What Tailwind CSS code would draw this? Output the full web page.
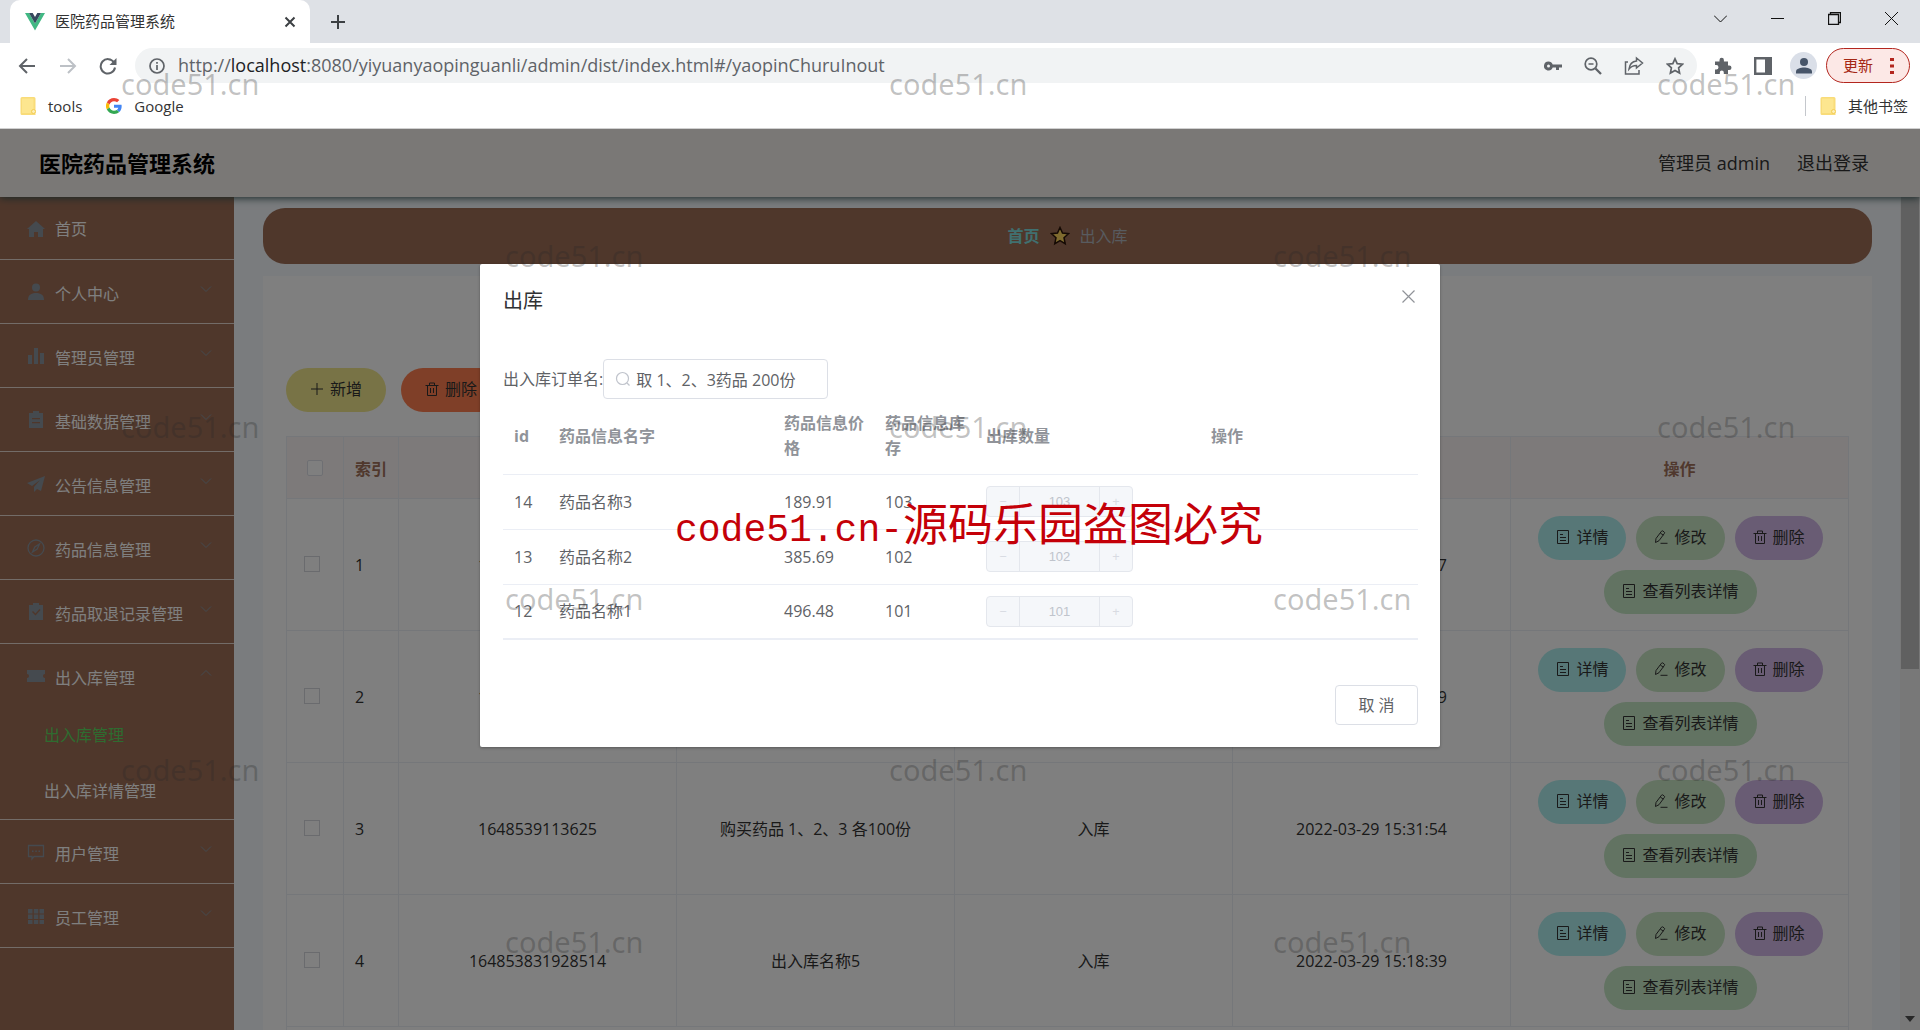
<!DOCTYPE html>
<html lang="zh-CN">
<head>
<meta charset="utf-8">
<meta name="viewport" content="width=device-width, initial-scale=1">
<title>医院药品管理系统</title>
<script src="https://cdn.jsdelivr.net/npm/@tailwindcss/browser@4"></script>
</head>
<body class="relative flex h-screen flex-col overflow-hidden bg-white font-['Open_Sans','Noto_Sans_CJK_SC',sans-serif] text-base text-[#333]">

<!-- Shared icon shapes -->
<svg class="hidden" aria-hidden="true">
  <symbol id="i-doc" viewBox="0 0 14 14"><path d="M1.5.5h11v13h-11zM4 4.5h3M4 7.5h6M4 10.500h6" fill="none" stroke="currentColor"/></symbol>
  <symbol id="i-edit" viewBox="0 0 14 14"><path d="M1.500 12.500 2 8.500 7.500 1.200a1 1 0 0 1 1.400-.2l1.300 1a1 1 0 0 1 .2 1.400L5 10.700ZM6.300 3l3 2.200M6.500 13.300H13.500" fill="none" stroke="currentColor"/></symbol>
  <symbol id="i-trash" viewBox="0 0 14 14"><path d="M.5 3.500h13M4.500 3.500v-2.500h5v2.500M2.500 3.500v10h9v-10M5.500 6v5M8.500 6v5" fill="none" stroke="currentColor"/></symbol>
  <symbol id="i-plus" viewBox="0 0 14 14"><path d="M7 1v12M1 7h12" fill="none" stroke="currentColor"/></symbol>
  <symbol id="i-down" viewBox="0 0 12 12"><path d="m1 3.500 5 5 5-5" fill="none" stroke="currentColor"/></symbol>
  <symbol id="i-folder" viewBox="0 0 16 18"><path d="M2 0h12a1.500 1.500 0 0 1 1.500 1.500V18H2A1.500 1.500 0 0 1 .5 16.500v-15A1.500 1.500 0 0 1 2 0Z" fill="#f9dc79"/><path d="M2 1.500h11.500V16H2Z" fill="#fde68f"/><circle cx="13.500" cy="14.500" r="2" fill="#fdeeb4" stroke="#f3cc52"/></symbol>
</svg>

<!-- Browser frame -->
<div class="flex h-[43px] shrink-0 items-stretch bg-[#dee1e6]">
  <div class="ml-[10px] flex w-[300px] items-center rounded-t-[10px] bg-white pr-[13px] pl-[15px] text-[15px]">
    <svg class="h-[18px] w-5" viewBox="0 0 20 18"><path d="M0 0h4l6 10.500L16 0h4L10 17.500Z" fill="#41b883"/><path d="M4 0h3.700L10 4l2.300-4H16l-6 10.500Z" fill="#35495e"/></svg>
    <span class="ml-[10px] flex-1">医院药品管理系统</span>
    <button aria-label="关闭标签页" class="grid size-[14px] place-items-center"><svg class="size-3" viewBox="0 0 12 12"><path d="m1.500 1.500 9 9m0-9-9 9" stroke="#3c4043" stroke-width="2"/></svg></button>
  </div>
  <button aria-label="新标签页" class="ml-5 grid w-4 place-items-center"><svg class="size-4" viewBox="0 0 16 16"><path d="M8 1v14M1 8h14" stroke="#3c4043" stroke-width="2"/></svg></button>
  <div class="mr-[22px] ml-auto flex items-center gap-11 pb-[6px] text-[#111]">
    <button aria-label="搜索标签页"><svg class="size-[13px]" viewBox="0 0 13 13"><path d="m0 3.500 6.500 6.500L13 3.500" fill="none" stroke="currentColor"/></svg></button>
    <button aria-label="最小化"><svg class="size-[13px]" viewBox="0 0 13 13"><path d="M0 6.500h13" stroke="currentColor"/></svg></button>
    <button aria-label="还原"><svg class="size-[13px]" viewBox="0 0 13 13"><path d="M.5 2.500h10v10H.5zM2.500 2.500v-2h10v10h-2" fill="none" stroke="currentColor" stroke-width="1.300"/></svg></button>
    <button aria-label="关闭"><svg class="size-[13px]" viewBox="0 0 13 13"><path d="m0 0 13 13M13 0 0 13" stroke="currentColor"/></svg></button>
  </div>
</div>
<div class="flex h-[45px] shrink-0 items-center bg-white pr-[10px] pl-[18px] text-[#5f6368]">
  <button aria-label="后退"><svg class="size-[18px]" viewBox="0 0 18 18"><path d="M17 9H2M9 2 2 9l7 7" fill="none" stroke="currentColor" stroke-width="2"/></svg></button>
  <button aria-label="前进" class="ml-[23px] text-[#bdc1c6]"><svg class="size-[18px]" viewBox="0 0 18 18"><path d="M1 9h15M9 2l7 7-7 7" fill="none" stroke="currentColor" stroke-width="2"/></svg></button>
  <button aria-label="重新加载" class="ml-[22px]"><svg class="size-[18px]" viewBox="0 0 18 18"><path d="M15 5.500A7.200 7.200 0 1 0 16 10.500" fill="none" stroke="currentColor" stroke-width="2"/><path d="M17.500 1v7h-7Z" fill="currentColor"/></svg></button>
  <div class="ml-[18px] flex h-[35px] flex-1 items-center rounded-full bg-[#f1f3f4] pr-[13px] pl-[14px]">
    <svg class="size-4 shrink-0" viewBox="0 0 16 16"><circle cx="8" cy="8" r="7" fill="none" stroke="currentColor" stroke-width="1.700"/><path d="M8 7v5M8 4v1.800" stroke="currentColor" stroke-width="1.700"/></svg>
    <div class="ml-[13px] flex-1 pb-[2px] text-lg leading-6 whitespace-nowrap">http://<span class="text-[#202124]">localhost</span>:8080/yiyuanyaopinguanli/admin/dist/index.html#/yaopinChuruInout</div>
    <div class="flex items-center gap-[22px]">
      <button aria-label="密码"><svg class="size-[18px]" viewBox="0 0 18 18"><path fill-rule="evenodd" d="M4.500 4.500a4.500 4.500 0 1 0 4.200 6H12V13h3v-2.500h3v-3H8.700a4.500 4.500 0 0 0-4.200-3Zm0 3a1.500 1.500 0 1 1 0 3 1.500 1.500 0 0 1 0-3Z" fill="currentColor"/></svg></button>
      <button aria-label="缩放"><svg class="size-[18px]" viewBox="0 0 18 18"><circle cx="7" cy="7" r="5.800" fill="none" stroke="currentColor" stroke-width="1.700"/><path d="m11.500 11.500 5.500 5.500" stroke="currentColor" stroke-width="2.300"/><path d="M4.500 7h5" stroke="currentColor" stroke-width="1.500"/></svg></button>
      <button aria-label="分享"><svg class="size-5" viewBox="0 0 20 20"><path d="M4 6H1.500v12h13.500v-4M12.500 2l6 5-6 5V9.500C9 9.500 7 10.500 5 13c.5-4 3-7.500 7.500-8Z" fill="none" stroke="currentColor" stroke-width="1.500"/></svg></button>
      <button aria-label="收藏"><svg class="size-[18px]" viewBox="0 0 18 18"><path d="m9 1.800 2.200 4.800 5.300.6-3.900 3.600 1 5.200L9 13.400 4.400 16l1-5.200L1.500 7.200l5.300-.6Z" fill="none" stroke="currentColor" stroke-width="1.700"/></svg></button>
    </div>
  </div>
  <div class="ml-[17px] flex items-center">
    <button aria-label="扩展程序"><svg class="size-[18px]" viewBox="0 0 18 18"><path d="M1 4.500h4.500V3a2.200 2.200 0 0 1 4.400 0v1.500H14V8.500h1.300a2.200 2.200 0 0 1 0 4.400H14V17H9.800v-1.500a2 2 0 0 0-4 0V17H1v-4.500h1.300a2.200 2.200 0 0 0 0-4.400H1Z" fill="currentColor"/></svg></button>
    <button aria-label="侧边栏" class="ml-[22px]"><svg class="size-[18px]" viewBox="0 0 18 18"><path d="M1.200 1.200h15.600v15.600H1.200z" fill="none" stroke="currentColor" stroke-width="2.400"/><path d="M11 1h6v16h-6z" fill="currentColor"/></svg></button>
    <button aria-label="用户" class="ml-[18px] grid size-[27px] place-items-center rounded-full bg-[#dadfe8]"><svg class="size-4" viewBox="0 0 16 16"><circle cx="8" cy="4" r="4" fill="#475569"/><path d="M0 15.500v-2C0 10.500 5 9.500 8 9.500s8 1 8 4v2Z" fill="#475569"/></svg></button>
    <button class="ml-[9px] flex h-[35px] w-[84px] items-center justify-between rounded-full border border-[#b3261e] bg-[#fce8e6] pr-[15px] pl-4 text-[15px] text-[#a52714]">更新<svg class="h-[18px] w-1" viewBox="0 0 4 18"><path d="M0 1h4v3H0zM0 7.500h4v3H0zM0 14h4v3H0z" fill="#b3261e"/></svg></button>
  </div>
</div>
<div class="flex h-[41px] shrink-0 items-center border-b border-[#d0d0d0] pr-3 pb-1 pl-5 text-[15px]">
  <a href="#" class="flex items-center gap-3"><svg class="h-[18px] w-4"><use href="#i-folder"/></svg>tools</a>
  <a href="#" class="ml-6 flex items-center gap-3"><svg class="size-4" viewBox="0 0 48 48"><path fill="#EA4335" d="M24 9.500c3.500 0 6.700 1.200 9.200 3.600l6.900-6.900C35.900 2.400 30.500 0 24 0 14.600 0 6.500 5.400 2.600 13.200l8 6.200C12.400 13.700 17.700 9.500 24 9.500z"/><path fill="#4285F4" d="M47 24.500c0-1.600-.2-3.100-.4-4.500H24v9h12.900c-.6 3-2.200 5.500-4.700 7.200l7.700 6C44.400 38 47 31.800 47 24.500z"/><path fill="#FBBC05" d="M10.500 28.600A14.500 14.500 0 0 1 10.500 19.400l-8-6.200a24 24 0 0 0 0 21.600z"/><path fill="#34A853" d="M24 48c6.500 0 11.900-2.100 15.900-5.800l-7.700-6c-2.200 1.400-4.900 2.300-8.200 2.300-6.300 0-11.600-4.200-13.500-9.900l-8 6.200C6.500 42.600 14.600 48 24 48z"/></svg>Google</a>
  <div class="ml-auto flex items-center gap-[14px]"><span class="h-5 w-px bg-[#c4c7cc]"></span><a href="#" class="flex items-center gap-3"><svg class="h-[18px] w-4"><use href="#i-folder"/></svg>其他书签</a></div>
</div>

<!-- Application -->
<div class="relative flex min-h-0 flex-1 flex-col overflow-hidden">
  <header class="relative z-10 flex h-[68px] shrink-0 items-center justify-between bg-[#f4f0ec] pr-[51px] pl-[39px] shadow-[0_1px_8px_#2f4f4f]">
    <h1 class="text-[22px] font-bold text-black">医院药品管理系统</h1>
    <nav class="flex gap-[27px] text-lg"><span>管理员 admin</span><a href="#">退出登录</a></nav>
  </header>
  <div class="flex min-h-0 flex-1">
    <nav class="w-[234px] shrink-0 overflow-hidden bg-[#9e6e56] text-white" id="side"></nav>

    <main class="min-w-0 flex-1 overflow-hidden bg-[#f5f8fc] pt-[11px] pr-7 pl-[29px]">
      <div class="flex h-14 items-center justify-center gap-[10px] rounded-[22px] bg-[#9e6e56]">
        <a href="#" class="font-bold text-[#80e0e0]">首页</a>
        <svg class="size-5" viewBox="0 0 20 20"><path d="m10 1.500 2.500 5.500 6 .7-4.500 4 1.200 6-5.200-3-5.200 3 1.200-6-4.500-4 6-.7Z" fill="#ffd75e" stroke="#2a1408" stroke-width="1.500"/></svg>
        <span class="text-[#b0b6be]">出入库</span>
      </div>
      <section class="mt-3 bg-white px-[23px] pt-[92px]">
        <div class="flex gap-[15px]">
          <button class="flex h-11 items-center gap-[6px] rounded-full bg-[#f0e68c] px-6 pb-[2px]"><svg class="size-[14px]"><use href="#i-plus"/></svg>新增</button>
          <button class="flex h-11 items-center gap-[6px] rounded-full bg-[#ff7f50] px-6 pb-[2px]"><svg class="size-[14px]"><use href="#i-trash"/></svg>删除</button>
        </div>
        <table class="mt-6 w-full table-fixed border-collapse text-center leading-6">
          <colgroup><col class="w-[57px]"><col class="w-[55px]"><col><col><col><col><col class="w-[338px]"></colgroup>
          <thead>
            <tr class="h-[62px] bg-[#fbf5f5] text-[#a0705a] [&>th]:border [&>th]:border-[#ebeef5] [&>th]:pt-[2px]">
              <th><input type="checkbox" aria-label="全选" class="mt-1 size-4 appearance-none rounded-xs border border-[#dcdfe6] bg-white"></th>
              <th>索引</th><th>出入库唯一编号</th><th>出入库订单名</th><th>订单类型</th><th>操作时间</th><th>操作</th>
            </tr>
          </thead>
          <tbody id="rows"></tbody>
        </table>
      </section>
    </main>

    <div class="flex w-5 shrink-0 flex-col items-center justify-between bg-[#f1f1f1]">
      <div class="h-[472px] w-[18px] bg-[#c1c1c1]"></div>
      <svg class="mb-2 h-[6px] w-[10px]" viewBox="0 0 10 6"><path d="M0 0h10L5 6Z" fill="#505050"/></svg>
    </div>
  </div>

  <!-- Dialog -->
  <div class="absolute inset-0 z-20 bg-black/50">
    <div role="dialog" aria-labelledby="dlg" class="mx-auto mt-[135px] w-1/2 rounded-xs bg-white pt-[22px] pr-[22px] pb-[22px] pl-[23px] text-[#606266] shadow-[0_1px_3px_rgba(0,0,0,.3)]">
      <div class="flex h-[29px] items-center justify-between">
        <h2 id="dlg" class="text-xl text-[#303133]">出库</h2>
        <button aria-label="关闭" class="mr-[3px] pb-[9px] text-[#909399]"><svg class="size-[13px]" viewBox="0 0 13 13"><path d="m.5.5 12 12m0-12-12 12" stroke="currentColor" stroke-width="1.200"/></svg></button>
      </div>
      <div class="mt-11 flex h-10 items-center">
        <label for="order" class="whitespace-nowrap">出入库订单名:</label>
        <div class="relative h-10 w-[225px]">
          <svg class="absolute top-3 left-3 size-4" viewBox="0 0 16 16"><circle cx="7.500" cy="7.500" r="6" fill="none" stroke="#c0c4cc" stroke-width="1.200"/><path d="m12 12 2.500 2.500" stroke="#c0c4cc" stroke-width="1.200"/></svg>
          <input id="order" value="取 1、2、3药品 200份" class="h-full w-full rounded-sm border border-[#dcdfe6] pr-4 pl-8">
        </div>
      </div>
      <table class="w-full table-fixed border-collapse border-b-2 border-[#ebeef5] text-left">
        <colgroup><col class="w-[45px]"><col class="w-[225px]"><col class="w-[101px]"><col class="w-[101px]"><col class="w-[225px]"><col></colgroup>
        <thead><tr class="h-[75px] border-b border-[#ebeef5] leading-[25px] text-[#909399] [&>th]:pr-2 [&>th]:pl-[11px]"><th>id</th><th>药品信息名字</th><th>药品信息价格</th><th>药品信息库存</th><th>出库数量</th><th>操作</th></tr></thead>
        <tbody id="items"></tbody>
      </table>
      <div class="mt-[45px] flex justify-end"><button class="h-10 w-[83px] rounded-sm border border-[#dcdfe6] text-[#606266]">取 消</button></div>
    </div>
  </div>
</div>

<!-- Watermarks -->
<div id="marks" aria-hidden="true" class="pointer-events-none absolute inset-0 z-30 overflow-hidden font-['Noto_Sans',sans-serif] text-[29px] leading-10 text-[#282828]/28"></div>
<div aria-hidden="true" class="pointer-events-none absolute inset-x-0 top-[492px] z-30 flex items-baseline justify-center pl-[18px] leading-[60px] whitespace-nowrap text-[#c40008]"><span class="font-['Liberation_Mono',monospace] text-[38px]">code51.cn-</span><span class="font-['Noto_Sans_CJK_SC',sans-serif] text-[45px]">源码乐园盗图必究</span></div>

<script>
const stroke = 'fill="none" stroke="currentColor" stroke-width="1.3"';
const menu = [
  ['首页', '<path d="M9 1 0 9h2v8h5v-5h4v5h5V9h2Z" fill="currentColor"/>'],
  ['个人中心', '<circle cx="9" cy="4.500" r="4" fill="currentColor"/><path d="M1 17c0-5 3-7 8-7s8 2 8 7Z" fill="currentColor"/>'],
  ['管理员管理', '<path d="M1 8h4v9H1zM7 1h4v16H7zM13 6h4v11h-4z" fill="currentColor"/>'],
  ['基础数据管理', '<path fill-rule="evenodd" d="M6 0h6v2h4v15H2V2h4ZM5 7v1.300h8V7ZM5 11v1.300h8V11Z" fill="currentColor"/>'],
  ['公告信息管理', '<path d="M18 1 0 8l5 3 8-6-6 7v5l3-3 4 2Z" fill="currentColor"/>'],
  ['药品信息管理', `<circle cx="9" cy="9" r="8" ${stroke}/><path d="m12.500 5-2.300 5-4.700 3 2.300-5Z" ${stroke}/>`],
  ['药品取退记录管理', '<path fill-rule="evenodd" d="M6 0h6v2h4v15H2V2h4ZM5 9l3.500 3.500L13.500 7l-1-1-4 4.500L6 8Z" fill="currentColor"/>'],
  ['出入库管理', '<path d="M0 3h18v4a2 2 0 0 0 0 4v4H0v-4a2 2 0 0 0 0-4Z" fill="currentColor"/>'],
  ['用户管理', `<path d="M1.500 2.500h15v11H7l-2 2.500v-2.500H1.500Z" ${stroke}/><path d="M5 7.500h1.500v1.500H5zM8.300 7.500h1.500v1.500H8.300zM11.500 7.500H13v1.500h-1.500z" fill="currentColor"/>`],
  ['员工管理', '<path d="M1 2h4.500v4.500H1zM6.800 2h4.500v4.500H6.800zM12.500 2H17v4.500h-4.500zM1 7.500h4.500V12H1zM6.800 7.500h4.500V12H6.800zM12.500 7.500H17V12h-4.500zM1 13h4.500v4H1zM6.800 13h4.500v4H6.800zM12.500 13H17v4h-4.500z" fill="currentColor"/>']
];
document.getElementById('side').innerHTML = menu.map(([t, p], i) => {
  const open = i === 7;
  const icon = `<svg class="size-[18px] text-[#8a949e]" viewBox="0 0 18 18">${p}</svg>`;
  if (!i) return `<a href="#" class="flex h-[63px] items-center gap-[10px] border-b border-[#e6d8d0] pt-[2px] pl-[27px]">${icon}<span>${t}</span></a>`;
  return `<div class="border-b border-[#e6d8d0]"><a href="#" class="flex h-[63px] items-center gap-[10px] pr-[22px] pl-[27px]">${icon}<span class="flex-1 pt-1">${t}</span><svg class="mb-[6px] size-3 text-[#8a949e] ${open ? 'rotate-180' : ''}"><use href="#i-down"/></svg></a>${open ? '<a href="#" class="flex h-14 items-center pl-11 text-[#5cd860]">出入库管理</a><a href="#" class="flex h-14 items-center pl-11">出入库详情管理</a>' : ''}</div>`;
}).join('');

const btn = (color, icon, text) => `<button class="flex h-11 items-center gap-[6px] rounded-full px-[18px] pb-[2px] ${color}"><svg class="size-[14px]"><use href="#${icon}"/></svg>${text}</button>`;
const rows = [
  ['1648541567017', '取 1、2、3药品 200份', '出库', '2022-03-29 16:12:47'],
  ['1648540279035', '出入库名称6', '出库', '2022-03-29 15:51:19'],
  ['1648539113625', '购买药品 1、2、3 各100份', '入库', '2022-03-29 15:31:54'],
  ['164853831928514', '出入库名称5', '入库', '2022-03-29 15:18:39']
];
document.getElementById('rows').innerHTML = rows.map((r, i) => `<tr class="h-[132px] [&>td]:border [&>td]:border-[#ebeef5]">
  <td><input type="checkbox" aria-label="选择第${i + 1}行" class="mt-1 mr-[6px] size-4 appearance-none border border-[#d4d6dc] bg-white"></td>
  <td class="pl-[11px] text-left">${i + 1}</td>${r.map(c => `<td>${c}</td>`).join('')}
  <td><div class="flex flex-wrap justify-center gap-[10px] pr-5 pl-[22px]">${btn('bg-[#afeeee]', 'i-doc', '详情')}${btn('bg-[#c8e6c5]', 'i-edit', '修改')}${btn('bg-[#d2b8e8]', 'i-trash', '删除')}${btn('bg-[#c4e6c4]', 'i-doc', '查看列表详情')}</div></td></tr>`).join('') + '<tr class="h-12"><td colspan="7" class="border border-[#ebeef5]"></td></tr>';

document.getElementById('items').innerHTML = [[14, '药品名称3', '189.91', 103], [13, '药品名称2', '385.69', 102], [12, '药品名称1', '496.48', 101]].map(([id, n, p, s]) => `<tr class="h-[55px] border-b border-[#ebeef5] [&>td]:px-[11px]">
  <td class="whitespace-nowrap">${id}</td><td>${n}</td><td>${p}</td><td>${s}</td>
  <td><div class="flex h-[31px] w-[147px] overflow-hidden rounded-sm border border-[#e4e7ed] bg-[#f5f7fa] text-[13px] text-[#c0c4cc]">
    <button disabled aria-label="减少" class="w-[33px] border-r border-[#e4e7ed] text-[#d8dbe2]">−</button>
    <input disabled aria-label="出库数量" value="${s}" class="min-w-0 flex-1 text-center font-['Liberation_Sans',sans-serif]">
    <button disabled aria-label="增加" class="w-[33px] border-l border-[#e4e7ed] text-[#d8dbe2]">+</button></div></td><td></td></tr>`).join('');

const marks = document.getElementById('marks');
for (let r = 0; r < 6; r++) {
  for (let c = 0; c < 3; c++) {
    if (r % 2 && c === 2) continue;
    const s = document.createElement('span');
    s.className = 'absolute';
    s.textContent = 'code51.cn';
    s.style.left = (r % 2 ? 505 : 121) + c * 768 + 'px';
    s.style.top = 64 + Math.round(r * 343 / 2) + 'px';
    marks.append(s);
  }
}
</script>
</body>
</html>
